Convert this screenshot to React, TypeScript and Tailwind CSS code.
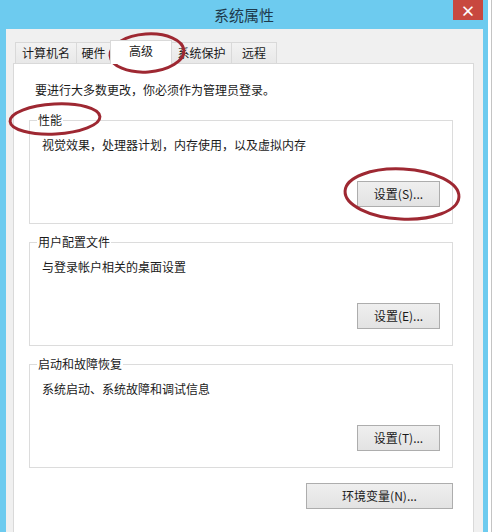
const FONT = "font-['Noto_Sans_CJK_SC',sans-serif]";

const TABS = [
  { label: '计算机名', w: 'w-[61px]', border: 'border-l' },
  { label: '硬件', w: 'w-[34px]', border: 'border-l' },
  { label: '高级', w: 'w-[62px]', border: 'border-l border-r', active: true },
  { label: '系统保护', w: 'w-[59px]', border: '' },
  { label: '远程', w: 'w-[46px]', border: 'border-l border-r' },
];

const GROUPS = [
  { title: '性能', desc: '视觉效果，处理器计划，内存使用，以及虚拟内存', btn: '设置(S)...' },
  { title: '用户配置文件', desc: '与登录帐户相关的桌面设置', btn: '设置(E)...' },
  { title: '启动和故障恢复', desc: '系统启动、系统故障和调试信息', btn: '设置(T)...' },
];

function Button({ children, className = '' }: { children: React.ReactNode; className?: string }) {
  return (
    <button
      className={`h-[26px] border border-[#adadad] bg-gradient-to-b from-[#efefef] to-[#e3e3e3] text-[12px] leading-[16px] text-[#1a1a1a] ${className}`}
    >
      {children}
    </button>
  );
}

export default function App() {
  return (
    <div className={`relative flex h-[532px] w-[493px] overflow-hidden ${FONT}`}>
      {/* window frame */}
      <div className="flex w-[488px] flex-col bg-[#6dcbef]">
        {/* title bar */}
        <div className="relative flex h-[29px] shrink-0 items-center justify-center">
          <span className="text-[15px] leading-[20px] text-[#1d3a4c]">系统属性</span>
          <div className="absolute right-[5px] top-0 flex h-[20px] w-[30px] items-center justify-center bg-[#c8483f] text-[15px] font-bold leading-none text-white">
            ×
          </div>
        </div>

        {/* dialog body */}
        <div className="ml-[6px] flex w-[477px] flex-1 flex-col overflow-hidden bg-[#f0f0f0] pt-[11px]">
          {/* tabs */}
          <div className="ml-[9px] flex items-end">
            {TABS.map((t) => (
              <div
                key={t.label}
                className={
                  t.active
                    ? `relative z-10 -mb-[1px] flex h-[24px] ${t.w} items-start justify-center border-t border-[#d9d9d9] bg-white pt-[2px] text-[12px] leading-[16px] text-[#1a1a1a] ${t.border}`
                    : `flex h-[21px] ${t.w} items-center justify-center border-t border-[#d9d9d9] bg-gradient-to-b from-[#f2f2f2] to-[#e8e8e8] text-[12px] leading-[16px] text-[#1a1a1a] ${t.border}`
                }
              >
                {t.label}
              </div>
            ))}
          </div>

          {/* tab panel */}
          <div className="ml-[7px] h-[480px] w-[461px] shrink-0 border border-[#d9d9d9] bg-white pl-[15px] pt-[18px]">
            <p className="pl-[6px] text-[12px] leading-[16px] text-[#1a1a1a]">要进行大多数更改，你必须作为管理员登录。</p>

            <div className="mt-[14px] flex w-[424px] flex-col gap-[10px]">
              {GROUPS.map((g) => (
                <fieldset key={g.title} className="m-0 min-w-0 border border-[#dcdcdc] p-0">
                  <legend className="ml-[7px] px-[1px] text-[12px] leading-[16px] text-[#1a1a1a]">{g.title}</legend>
                  <div className="flex flex-col px-[12px] pb-[16px] pt-[9px]">
                    <p className="text-[12px] leading-[16px] text-[#1a1a1a]">{g.desc}</p>
                    <div className="mt-[28px] flex justify-end">
                      <Button className="w-[83px]">{g.btn}</Button>
                    </div>
                  </div>
                </fieldset>
              ))}
            </div>

            <div className="mt-[15px] flex w-[424px] justify-end">
              <Button className="w-[147px]">环境变量(N)...</Button>
            </div>
          </div>
        </div>
      </div>

      {/* edge of the window behind */}
      <div className="flex flex-1">
        <div className="w-[3px] bg-white" />
        <div className="w-[1px] bg-[#c4c4c4]" />
        <div className="flex-1 bg-white" />
      </div>

      {/* red annotation marks */}
      <svg className="pointer-events-none absolute inset-0" width="493" height="532" viewBox="0 0 493 532">
        <g fill="none" stroke="#9e2832" strokeWidth="3">
          <ellipse cx="147" cy="53" rx="37" ry="19" transform="rotate(-4 147 53)" />
          <ellipse cx="55" cy="119" rx="45" ry="15" transform="rotate(-3 55 119)" />
          <ellipse cx="402" cy="194" rx="57" ry="25" transform="rotate(3 402 194)" />
        </g>
      </svg>
    </div>
  );
}
